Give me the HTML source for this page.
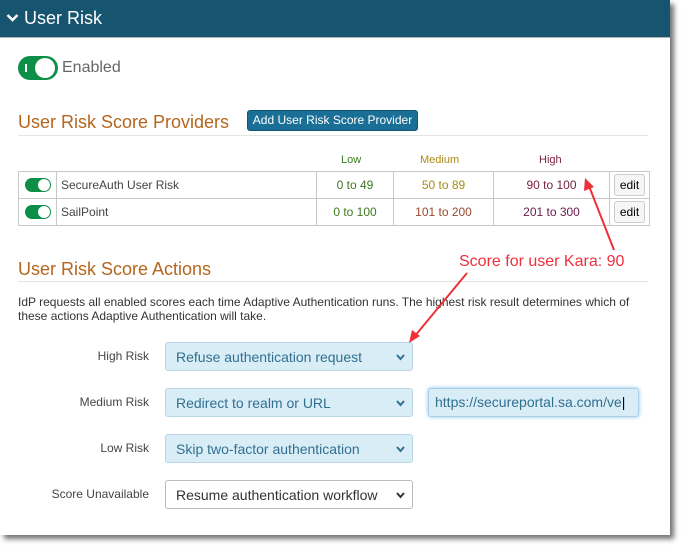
<!DOCTYPE html>
<html><head><style>
body{margin:0;width:685px;height:551px;background:#fff;font-family:"Liberation Sans",sans-serif;position:relative;overflow:hidden}
.a{position:absolute}
.panel{left:0;top:0;width:670px;height:535px;background:#fff;box-shadow:4px 4px 5px rgba(0,0,0,.55)}
.hdr{left:0;top:0;width:670px;height:37px;background:#16546f;border-bottom:1px solid #b0b0b0}
.h2{color:#b5651d;font-size:18px}
.hr{height:1px;background:#e4e4e4;left:18px;width:630px}
.tog{width:26px;height:14px;border-radius:8px;background:#0e8f48}
.tog:after{content:"";position:absolute;right:1px;top:1px;width:12px;height:12px;border-radius:50%;background:#fff}
table{table-layout:fixed}
td{border:1px solid #c8c8c8;font-size:12px;padding:0;height:26px;overflow:hidden;white-space:nowrap}
.sel{position:absolute;left:165px;width:248px;height:29px;border:1px solid #b9d6e6;background:#d9edf7;border-radius:3px;color:#31708f;font-size:14px;line-height:28px;padding-left:10px;box-sizing:border-box}
.sel svg{position:absolute;right:7px;top:11px}
.lbl{position:absolute;right:536px;font-size:12px;color:#444;text-align:right}
</style></head><body>
<div class="a panel"></div>
<div class="a hdr"></div>
<svg class="a" style="left:6px;top:13px" width="13" height="10"><path d="M1.5 2 L6.5 7 L11.5 2" stroke="#fff" stroke-width="2.5" fill="none"/></svg>
<div class="a" style="left:24px;top:8px;color:#fff;font-size:18px">User Risk</div>
<div class="a" style="left:18px;top:56px;width:40px;height:24px;border-radius:12px;background:#0e8f48"><div class="a" style="left:17px;top:2px;width:20px;height:20px;border-radius:50%;background:#fff"></div><div class="a" style="left:7px;top:8px;width:2px;height:8px;background:#fff"></div></div>
<div class="a" style="left:62px;top:59px;font-size:16px;color:#666">Enabled</div>
<div class="a h2" style="left:18px;top:112px">User Risk Score Providers</div>
<div class="a" style="left:247px;top:110px;width:171px;height:21px;background:#1a6f96;border:1px solid #135672;border-radius:3px;box-sizing:border-box;color:#fff;font-size:12px;text-align:center;line-height:19px">Add User Risk Score Provider</div>
<div class="a hr" style="top:135px"></div>
<div class="a" style="left:341px;top:154px;font-size:11px;color:#3b7a1e">Low</div>
<div class="a" style="left:420px;top:154px;font-size:11px;color:#a98a12">Medium</div>
<div class="a" style="left:539px;top:154px;font-size:11px;color:#7b1f3f">High</div>
<table class="a" style="left:18px;top:171px;border-collapse:collapse;width:631px">
<colgroup><col style="width:38px"><col style="width:260px"><col style="width:77px"><col style="width:100px"><col style="width:116px"><col style="width:40px"></colgroup>
<tr><td><div class="tog" style="position:relative;margin-left:6px"></div></td><td style="padding-left:4px;color:#444">SecureAuth User Risk</td><td style="text-align:center;color:#3b7a1e">0 to 49</td><td style="text-align:center;color:#a98a12">50 to 89</td><td style="text-align:center;color:#7b1f3f">90 to 100</td><td style="text-align:center"><span style="display:inline-block;border:1px solid #ccc;border-radius:3px;padding:3px 5px;background:#f6f6f6">edit</span></td></tr>
<tr><td><div class="tog" style="position:relative;margin-left:6px"></div></td><td style="padding-left:4px;color:#444;vertical-align:top;padding-top:6px;height:20px">SailPoint</td><td style="text-align:center;color:#3b7a1e">0 to 100</td><td style="text-align:center;color:#9a4a2a">101 to 200</td><td style="text-align:center;color:#6b1a4a">201 to 300</td><td style="text-align:center"><span style="display:inline-block;border:1px solid #ccc;border-radius:3px;padding:3px 5px;background:#f6f6f6">edit</span></td></tr>
</table>
<div class="a h2" style="left:18px;top:259px">User Risk Score Actions</div>
<div class="a hr" style="top:281px"></div>
<div class="a" style="left:18px;top:295px;width:630px;font-size:12px;color:#333;line-height:14px">IdP requests all enabled scores each time Adaptive Authentication runs. The highest risk result determines which of these actions Adaptive Authentication will take.</div>
<div class="lbl" style="top:349px">High Risk</div>
<div class="lbl" style="top:395px">Medium Risk</div>
<div class="lbl" style="top:441px">Low Risk</div>
<div class="lbl" style="top:487px">Score Unavailable</div>
<div class="sel" style="top:342px">Refuse authentication request<svg width="9" height="7"><path d="M1 1L4.5 5L8 1" stroke="#31708f" stroke-width="2" fill="none"/></svg></div>
<div class="sel" style="top:388px">Redirect to realm or URL<svg width="9" height="7"><path d="M1 1L4.5 5L8 1" stroke="#31708f" stroke-width="2" fill="none"/></svg></div>
<div class="sel" style="top:434px">Skip two-factor authentication<svg width="9" height="7"><path d="M1 1L4.5 5L8 1" stroke="#31708f" stroke-width="2" fill="none"/></svg></div>
<div class="sel" style="top:480px;background:#fff;border-color:#bbb;color:#333">Resume authentication workflow<svg width="9" height="7"><path d="M1 1L4.5 5L8 1" stroke="#333" stroke-width="2" fill="none"/></svg></div>
<div class="a" style="left:428px;top:388px;width:211px;height:29px;box-sizing:border-box;border:1px solid #a9d0e8;background:#d9edf7;border-radius:3px;box-shadow:0 0 4px #8cc4ea;color:#31708f;font-size:14px;line-height:27px;padding-left:6px">https://secureportal.sa.com/ve<span style="color:#000">|</span></div>
<div class="a" style="left:459px;top:253px;font-size:16px;color:#f0303c">Score for user Kara: 90</div>
<svg class="a" style="left:0;top:0" width="685" height="551">
<path d="M614 250 L589 186" stroke="#ee3038" stroke-width="2" fill="none"/><path d="M585 178 L584 191 L594 187 Z" fill="#ee3038"/>
<path d="M467 273 L414 337" stroke="#ee3038" stroke-width="2" fill="none"/><path d="M409 343 L412 330 L420 336 Z" fill="#ee3038"/>
</svg>
</body></html>
